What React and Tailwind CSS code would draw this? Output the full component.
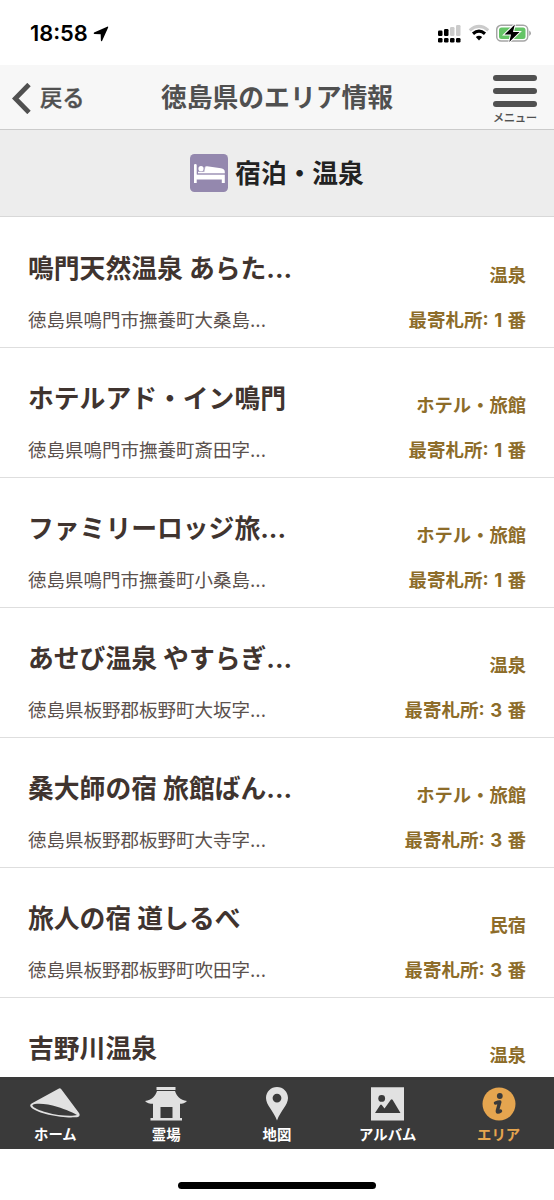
import React from "react";
import clsx from "clsx";

const hotels = [
  { name: "鳴門天然温泉 あらた...", address: "徳島県鳴門市撫養町大桑島...", type: "温泉", temple: 1 },
  { name: "ホテルアド・イン鳴門", address: "徳島県鳴門市撫養町斎田字...", type: "ホテル・旅館", temple: 1 },
  { name: "ファミリーロッジ旅...", address: "徳島県鳴門市撫養町小桑島...", type: "ホテル・旅館", temple: 1 },
  { name: "あせび温泉 やすらぎ...", address: "徳島県板野郡板野町大坂字...", type: "温泉", temple: 3 },
  { name: "桑大師の宿 旅館ばん...", address: "徳島県板野郡板野町大寺字...", type: "ホテル・旅館", temple: 3 },
  { name: "旅人の宿 道しるべ", address: "徳島県板野郡板野町吹田字...", type: "民宿", temple: 3 },
  { name: "吉野川温泉", type: "温泉" },
];

const HatIcon = () => (
  <svg width="50" height="34" viewBox="0 0 50 34">
    <path d="M28.5 1.7 Q30 0.700 31.300 2.200 L49 26 Q51.500 30.700 44 30.300 C32 31 8 27 1 20.200 Q-1 18 2 16.300 Z" fill="#e1e1e1" />
    <path d="M2.300 18.200 C5 15.800 18 16.800 27 19.700 C36 22.500 44 26 47 28 C42 29.600 27 28.500 17 25.500 C9 23.300 3 20.800 2.300 18.200 Z" fill="#3a3a3a" />
  </svg>
);

const TempleIcon = () => (
  <svg width="42" height="34" viewBox="0 0 42 34" fill="#e1e1e1">
    <path d="M11.500 0 H30.500 V3 H11.500 Z" />
    <path d="M12 4 H30 C31.500 9 35 13 42 14 C40.500 16.200 37 16.800 35 16.800 V31 H37 V33.500 H5.500 V31 H8 V16.800 C5 16.800 1.500 16.200 0 14 C7 13 10.500 9 12 4 Z M15.500 20 V31 H27.500 V20 Z" fillRule="evenodd" />
  </svg>
);

const PinIcon = () => (
  <svg width="22" height="34" viewBox="0 0 22 34">
    <path d="M11 0 C4.900 0 0 4.900 0 11 C0 18 7.500 24 11 33.500 C14.500 24 22 18 22 11 C22 4.900 17.100 0 11 0 Z M11 6.700 A4.400 4.400 0 1 1 11 15.500 A4.400 4.400 0 1 1 11 6.700 Z" fill="#e1e1e1" fillRule="evenodd" />
  </svg>
);

const AlbumIcon = () => (
  <svg width="33" height="34" viewBox="0 0 33 34">
    <path d="M0 0.300 H33 V33.500 H0 Z" fill="#e1e1e1" />
    <circle cx="10.700" cy="11.400" r="3.400" fill="#3a3a3a" />
    <path d="M4 26 L9.200 18 Q10 17 10.800 18 L13.500 21.500 L19.800 12.800 Q20.700 11.600 21.600 12.800 L29.500 26 Z" fill="#3a3a3a" />
  </svg>
);

const InfoIcon = () => (
  <svg width="34" height="34" viewBox="0 0 34 34">
    <circle cx="17" cy="17" r="16.500" fill="#e5a54f" />
    <circle cx="17.800" cy="9" r="2.900" fill="#3a3a3a" />
    <path d="M13.500 16 Q16.500 14.800 17.800 15 L15.400 23.500 Q15 26.500 18.500 24" fill="none" stroke="#3a3a3a" strokeWidth="3.400" strokeLinecap="round" strokeLinejoin="round" />
  </svg>
);

const BedIcon = () => (
  <svg width="38" height="38" viewBox="0 0 38 38">
    <rect width="38" height="38" rx="4.500" fill="#9488ae" />
    <g fill="#fff">
      <path d="M4 11 Q4 10 5.300 10 Q6.700 10 6.700 11 V20.500 H34.800 V29 H31.800 V25.500 H6.700 V29 H4 Z" />
      <circle cx="11" cy="14.700" r="2.600" />
      <path d="M8 17.800 H13.500 L14.500 13.500 Q15 12.300 17 12.300 L31 14.300 Q34.800 15 34.800 18 V19.500 H8 Z" />
    </g>
    <path d="M7 20 H35 M13.800 18 L15 12.500" stroke="#9488ae" strokeWidth="0.700" />
  </svg>
);

const tabs = [
  { label: "ホーム", icon: <HatIcon /> },
  { label: "霊場", icon: <TempleIcon /> },
  { label: "地図", icon: <PinIcon /> },
  { label: "アルバム", icon: <AlbumIcon /> },
  { label: "エリア", icon: <InfoIcon />, active: true },
];

const StatusBar = () => (
  <div className="h-[65px] shrink-0 flex items-start justify-between pt-[20px] pl-[30px] pr-[22px]">
    <div className="flex items-center text-black">
      <span className="text-[21.800px] leading-[27px] font-semibold">18:58</span>
      <svg className="ml-[5px]" width="16" height="16" viewBox="0 0 15 15">
        <path d="M13.300 0.600 Q14.600 0.300 14.200 1.500 L8.600 13.900 Q7.800 15 7.400 13.700 L7.200 7.700 L1.200 7.400 Q0 7 1 6.200 Z" />
      </svg>
    </div>
    <div className="flex items-start pt-[4px]">
      <svg width="24" height="20" viewBox="0 0 24 20">
        <rect x="0" y="6.500" width="4.500" height="5.500" rx="1.200" />
        <rect x="6" y="5" width="4.500" height="7" rx="1.200" />
        <rect x="12" y="3" width="4.500" height="9" rx="1.200" fill="#cbcbcb" />
        <rect x="18" y="1" width="4.500" height="11" rx="1.200" fill="#cbcbcb" />
        <rect x="0" y="14" width="4.500" height="4.500" rx="1.200" />
        <rect x="6" y="14" width="4.500" height="4.500" rx="1.200" />
        <rect x="12" y="14" width="4.500" height="4.500" rx="1.200" />
        <rect x="18" y="14" width="4.500" height="4.500" rx="1.200" />
      </svg>
      <svg className="ml-[6px]" width="22" height="18" viewBox="0 0 22 18">
        <path d="M1.700 6.300 Q11 -1.500 20.300 6.300" fill="none" stroke="#cbcbcb" strokeWidth="3" />
        <path d="M5 9.700 Q11 4.700 17 9.700" fill="none" stroke="#000" strokeWidth="3.200" />
        <path d="M7.800 13 Q11 10.300 14.200 13 L11 16.500 Z" />
      </svg>
      <svg className="ml-[6px]" width="36" height="19" viewBox="0 0 36 19">
        <rect x="0.700" y="1.300" width="31" height="15.800" rx="4.500" fill="#fff" stroke="#a5a5a5" strokeWidth="1.500" />
        <rect x="3" y="3.500" width="26.500" height="11.500" rx="2.500" fill="#65c466" />
        <path d="M33.200 6.500 Q35 7.500 35 9.200 Q35 11 33.200 12 Z" fill="#a5a5a5" />
        <path d="M18.800 0.500 L8.500 10.600 H15 L13.300 18 L23.500 8 H17 Z" stroke="#fff" strokeWidth="2" paintOrder="stroke" />
      </svg>
    </div>
  </div>
);

const App = () => {
  return (
    <div className="w-[554px] h-[1200px] overflow-hidden flex flex-col bg-white font-['Inter','Noto_Sans_CJK_JP',sans-serif]">
      <StatusBar />

      {/* Header */}
      <header className="h-[65px] shrink-0 grid grid-cols-[154px_1fr_154px] items-center bg-[#f7f7f7] border-b border-[#cbcbcb] text-[#505050]">
        <div className="flex items-center pl-[12px] pt-[2px]">
          <svg width="19" height="31" viewBox="0 0 19 31">
            <path d="M17 1.500 L3.300 15.500 L17 29.500" fill="none" stroke="#505050" strokeWidth="4.800" />
          </svg>
          <span className="ml-[9px] text-[22.300px] leading-[30px] font-medium [-webkit-text-stroke:0.4px]">戻る</span>
        </div>
        <h1 className="pt-[2px] text-[25.800px] leading-[36px] font-bold text-center whitespace-nowrap">
          徳島県のエリア情報
        </h1>
        <div className="flex flex-col items-center justify-self-end w-[44px] mr-[17px] pt-[5px]">
          <div className="flex flex-col gap-[7px]">
            <div className="w-[44px] h-[6px] rounded-full bg-[#505050]"></div>
            <div className="w-[44px] h-[6px] rounded-full bg-[#505050]"></div>
            <div className="w-[44px] h-[6px] rounded-full bg-[#505050]"></div>
          </div>
          <span className="mt-[4px] text-[11px] leading-[14px] font-medium [-webkit-text-stroke:0.2px] whitespace-nowrap">メニュー</span>
        </div>
      </header>

      {/* Category */}
      <div className="h-[87px] shrink-0 flex items-center justify-center gap-[7px] bg-[#ededed] border-b border-[#d8d8d8]">
        <BedIcon />
        <h2 className="pt-[2px] text-[25.700px] leading-[36px] font-bold text-[#222222]">宿泊・温泉</h2>
      </div>

      {/* Hotel list */}
      <div className="flex-1 min-h-0 overflow-hidden pt-[0.5px]">
        {hotels.map((hotel) => (
          <div
            key={hotel.name}
            className="h-[130.100px] px-[28px] pt-[32px] border-b border-[#dedede] last:h-auto last:border-b-0"
          >
            <div className="flex justify-between">
              <h3 className="text-[25.800px] leading-[38px] font-bold text-[#40342f]">{hotel.name}</h3>
              <span className="pt-[12px] text-[18.300px] leading-[26px] font-bold text-[#8d6c29]">{hotel.type}</span>
            </div>
            {hotel.address && (
              <div className="flex justify-between pt-[19px] text-[18.500px] leading-[26px]">
                <span className="text-[#5b514d]">{hotel.address}</span>
                <span className="font-bold text-[#8d6c29] [word-spacing:1px]">
                  最寄札所: {hotel.temple} 番
                </span>
              </div>
            )}
          </div>
        ))}
      </div>

      {/* Tab bar */}
      <nav className="h-[72px] shrink-0 grid grid-cols-5 bg-[#3a3a3a]">
        {tabs.map((tab) => (
          <div
            key={tab.label}
            className={clsx(
              "flex flex-col items-center pt-[10px]",
              tab.active ? "text-[#e5a54f]" : "text-white"
            )}
          >
            {tab.icon}
            <span className="mt-[4px] text-[14.400px] leading-[20px] font-bold">{tab.label}</span>
          </div>
        ))}
      </nav>

      {/* Home indicator */}
      <div className="h-[51px] shrink-0 flex justify-center items-start pt-[33px]">
        <div className="w-[198px] h-[7px] rounded-full bg-black"></div>
      </div>
    </div>
  );
};

export default App;
